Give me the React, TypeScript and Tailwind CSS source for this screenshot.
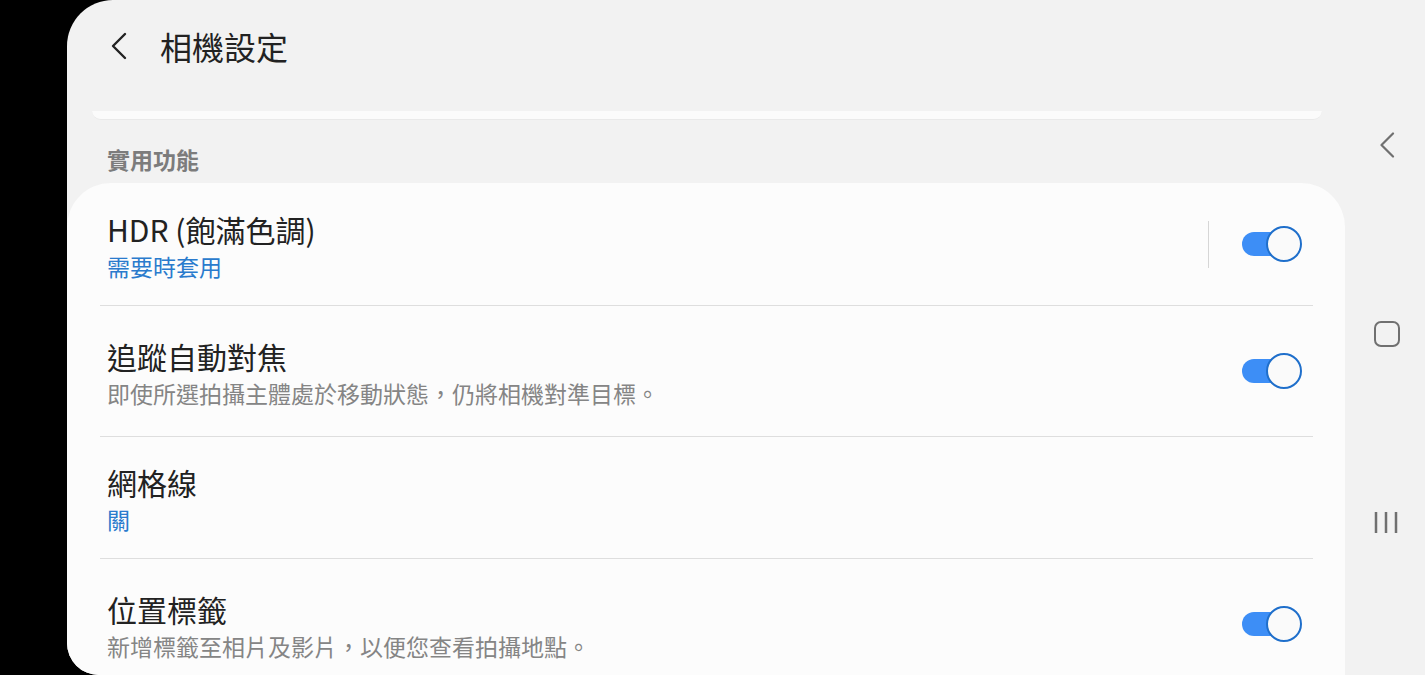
const FONT = { fontFamily: '"Noto Sans CJK TC", "Noto Sans", sans-serif' };

type Row = {
  title: string;
  sub: string;
  subTone: 'blue' | 'gray';
  toggle: boolean;
  split?: boolean;
  h: string;
};

const ROWS: Row[] = [
  { title: 'HDR (飽滿色調)', sub: '需要時套用', subTone: 'blue', toggle: true, split: true, h: 'h-[122px]' },
  { title: '追蹤自動對焦', sub: '即使所選拍攝主體處於移動狀態，仍將相機對準目標。', subTone: 'gray', toggle: true, h: 'h-[130px]' },
  { title: '網格線', sub: '關', subTone: 'blue', toggle: false, h: 'h-[121px]' },
  { title: '位置標籤', sub: '新增標籤至相片及影片，以便您查看拍攝地點。', subTone: 'gray', toggle: true, h: 'h-[130px]' },
];

function Toggle() {
  return (
    <div className="relative w-[60px] h-[36px] shrink-0">
      <div className="absolute left-0 top-[6px] w-[50px] h-[24px] rounded-full bg-[#3d8ef6]" />
      <div className="absolute right-0 top-0 w-[36px] h-[36px] rounded-full bg-[#fafafa] border-2 border-[#1f6fcb]" />
    </div>
  );
}

function SettingRow({ row, last }: { row: Row; last: boolean }) {
  return (
    <div className="shrink-0">
      <div className={`flex items-center ${row.h}`}>
        <div className="flex-1 pl-[7px] pt-[3px]">
          <div className="text-[30px] leading-[34px] text-[#222]">{row.title}</div>
          <div
            className={`text-[23px] leading-[28px] mt-[6px] ${
              row.subTone === 'blue' ? 'text-[#2a7bcd]' : 'text-[#858585]'
            }`}
          >
            {row.sub}
          </div>
        </div>
        {row.split && <div className="w-px h-[47px] bg-[#d6d6d6] mr-[33px]" />}
        {row.toggle && (
          <div className="mr-[11px]">
            <Toggle />
          </div>
        )}
      </div>
      {!last && <div className="h-px bg-[#dedede]" />}
    </div>
  );
}

export default function App() {
  return (
    <div className="w-[1425px] h-[675px] bg-black flex overflow-hidden" style={FONT}>
      <div className="w-[67px] shrink-0" />
      <div className="flex-1 flex bg-[#f2f2f2] rounded-tl-[46px] rounded-bl-[32px] overflow-hidden">
        {/* main column */}
        <div className="w-[1278px] flex flex-col">
          <div className="h-[92px] shrink-0 flex items-center pl-[42px]">
            <svg width="20" height="28" viewBox="0 0 20 28" fill="none">
              <path d="M16 2 L4 14 L16 26" stroke="#222" strokeWidth="2.4" strokeLinecap="round" strokeLinejoin="round" />
            </svg>
            <span className="ml-[31px] text-[32px] leading-[40px] text-[#222]">相機設定</span>
          </div>

          <div className="shrink-0 mt-[19px] ml-[25px] mr-[23px] h-[9px] bg-[#fbfbfb] rounded-b-[10px] border-b border-[#e9e9e9]" />

          <div className="shrink-0 mt-[24px] pl-[40px] text-[23px] leading-[30px] font-bold text-[#7c7c7c]">實用功能</div>

          <div className="mt-[9px] flex-1 min-h-0 bg-[#fcfcfc] rounded-t-[44px] pl-[33px] pr-[32px] overflow-hidden">
            {ROWS.map((r, i) => (
              <SettingRow key={r.title} row={r} last={i === ROWS.length - 1} />
            ))}
          </div>
        </div>

        {/* navigation bar */}
        <div className="flex-1 flex flex-col items-center pt-[132px]">
          <svg className="ml-[3px]" width="16" height="26" viewBox="0 0 16 26" fill="none">
            <path d="M14 1.5 L2.5 13 L14 24.5" stroke="#707070" strokeWidth="2.2" strokeLinecap="round" strokeLinejoin="round" />
          </svg>
          <div className="mt-[163px] ml-[3px] w-[26px] h-[26px] rounded-[7px] border-[2.5px] border-[#707070]" />
          <svg className="mt-[164px] ml-[2px]" width="24" height="23" viewBox="0 0 24 23" fill="none">
            <path d="M2 1 V22 M12 1 V22 M22 1 V22" stroke="#707070" strokeWidth="2.5" />
          </svg>
        </div>
      </div>
    </div>
  );
}
